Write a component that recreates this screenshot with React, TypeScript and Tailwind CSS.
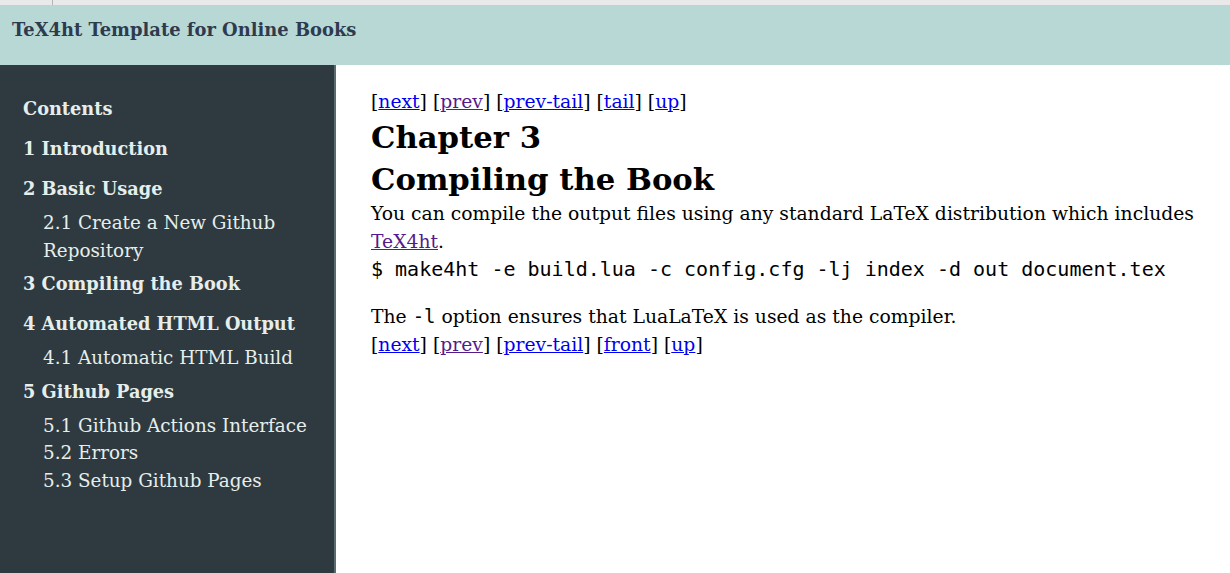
const serif = { fontFamily: '"DejaVu Serif", "Liberation Serif", serif' };
const mono = { fontFamily: '"DejaVu Sans Mono", "Liberation Mono", monospace' };

type TocItem = { label: string; sub?: string[] };

const toc: TocItem[] = [
  { label: '1 Introduction' },
  { label: '2 Basic Usage', sub: ['2.1 Create a New Github Repository'] },
  { label: '3 Compiling the Book' },
  { label: '4 Automated HTML Output', sub: ['4.1 Automatic HTML Build'] },
  { label: '5 Github Pages', sub: ['5.1 Github Actions Interface', '5.2 Errors', '5.3 Setup Github Pages'] },
];

const NavLinks = ({ last }: { last: string }) => (
  <div className="leading-[28px]">
    [<a href="#" className="text-[#0000ee] underline">next</a>]{' '}
    [<a href="#" className="text-[#551a8b] underline">prev</a>]{' '}
    [<a href="#" className="text-[#0000ee] underline">prev-tail</a>]{' '}
    [<a href="#" className="text-[#0000ee] underline">{last}</a>]{' '}
    [<a href="#" className="text-[#0000ee] underline">up</a>]
  </div>
);

const App = () => {
  return (
    <div className="h-[573px] overflow-hidden flex flex-col bg-white" style={serif}>
      <div className="h-[6px] bg-[#e9e9e9] border-b border-[#cdcdcd] flex shrink-0">
        <div className="w-[53px] border-r border-[#b5b5b5]" />
      </div>
      <header className="h-[59px] shrink-0 bg-[#b8d8d6] px-[12px] pt-[10px]">
        <h1 className="text-[#2e3b4e] font-bold text-[17.9px] leading-[28px]">TeX4ht Template for Online Books</h1>
      </header>
      <div className="flex flex-1 min-h-0">
        <nav className="w-[336px] shrink-0 bg-[#2e3a40] border-r-2 border-[#5b6b72] pl-[23px] pr-[20px] pt-[30px] text-[#e6eeec] text-[18.35px]">
          <div className="font-bold text-[17.75px] leading-[28px] mb-[6px]">Contents</div>
          {toc.map((item) => (
            <div key={item.label}>
              <div className="font-bold text-[17.75px] leading-[28px] py-[6px]">{item.label}</div>
              {item.sub?.map((s) => (
                <div key={s} className="pl-[20px] leading-[27.5px]">{s}</div>
              ))}
            </div>
          ))}
        </nav>
        <main className="flex-1 pl-[35px] pr-[20px] pt-[23px] text-black text-[18.75px]">
          <NavLinks last="tail" />
          <h2 className="font-bold text-[30.7px] leading-[42px]">
            Chapter 3<br />Compiling the Book
          </h2>
          <p className="leading-[28px]">
            You can compile the output files using any standard LaTeX distribution which includes{' '}
            <a href="#" className="text-[#551a8b] underline">TeX4ht</a>.
          </p>
          <pre className="leading-[27px] text-[20px]" style={mono}>
            $ make4ht -e build.lua -c config.cfg -lj index -d out document.tex
          </pre>
          <p className="leading-[27.5px] mt-[20px]">
            The <code className="text-[19px]" style={mono}>-l</code> option ensures that LuaLaTeX is used as the compiler.
          </p>
          <NavLinks last="front" />
        </main>
      </div>
    </div>
  );
};

export default App;
